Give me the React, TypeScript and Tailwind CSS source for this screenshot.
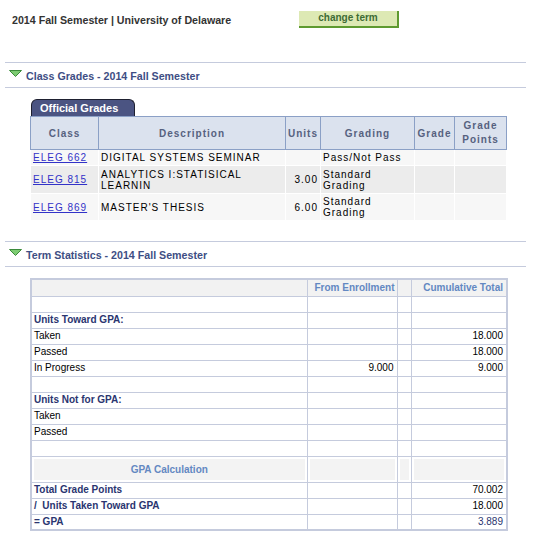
import React from "react";

function Tri() {
  return (
    <svg width="13" height="7" viewBox="0 0 13 7" className="shrink-0">
      <polygon points="0.5,0.5 12.5,0.5 6.5,6.5" fill="#7dcc72" stroke="#3b8a3b" strokeWidth="1" />
    </svg>
  );
}

function Band({ title }: { title: string }) {
  return (
    <div className="ml-[5px] w-[521px] h-[26px] border-y border-[#c5cbdd] flex items-start pt-[7px] pl-[4px]">
      <Tri />
      <div className="ml-[4px] -mt-[1px] text-[10.67px] leading-[14px] font-bold text-[#3e4e84]">{title}</div>
    </div>
  );
}

type GRow = { cls: string; desc: string[]; units: string; grading: string[]; h: string; bg: string };

const grades: GRow[] = [
  { cls: "ELEG 662", desc: ["DIGITAL SYSTEMS SEMINAR"], units: "", grading: ["Pass/Not Pass"], h: "h-[16px]", bg: "bg-[#f7f7f7]" },
  { cls: "ELEG 815", desc: ["ANALYTICS I:STATISICAL", "LEARNIN"], units: "3.00", grading: ["Standard", "Grading"], h: "h-[28px]", bg: "bg-[#ececec]" },
  { cls: "ELEG 869", desc: ["MASTER'S THESIS"], units: "6.00", grading: ["Standard", "Grading"], h: "h-[27px]", bg: "bg-[#f7f7f7]" },
];

type SRow =
  | { kind: "blank" }
  | { kind: "label"; text: string }
  | { kind: "data"; text: string; c2?: string; c4?: string; bold?: boolean; blue?: boolean }
  | { kind: "calc" };

const stats: SRow[] = [
  { kind: "blank" },
  { kind: "label", text: "Units Toward GPA:" },
  { kind: "data", text: "Taken", c4: "18.000" },
  { kind: "data", text: "Passed", c4: "18.000" },
  { kind: "data", text: "In Progress", c2: "9.000", c4: "9.000" },
  { kind: "blank" },
  { kind: "label", text: "Units Not for GPA:" },
  { kind: "data", text: "Taken" },
  { kind: "data", text: "Passed" },
  { kind: "blank" },
  { kind: "calc" },
  { kind: "data", text: "Total Grade Points", c4: "70.002", bold: true },
  { kind: "data", text: "/  Units Taken Toward GPA", c4: "18.000", bold: true },
  { kind: "data", text: "= GPA", c4: "3.889", bold: true, blue: true },
];

const sc = "border border-[#c5cbdd] h-[16px] p-0 align-middle leading-[12px]";

export default function App() {
  return (
    <div className="w-[535px] h-[548px] bg-white font-['Liberation_Sans',Arial,sans-serif] text-black overflow-hidden">
      <div className="flex items-start pl-[12px] pt-[11px] h-[62px]">
        <div className="w-[287px] pt-[3px] text-[10.67px] font-bold text-[#333] leading-[12px]">
          2014 Fall Semester | University of Delaware
        </div>
        <div className="w-[100px] h-[17px] bg-[#dde9b4] border-r-2 border-b-2 border-[#5e9a30] text-center text-[10px] font-bold text-[#3d6b35] leading-[14px]">
          change term
        </div>
      </div>

      <Band title="Class Grades - 2014 Fall Semester" />

      <div className="mt-[11px] ml-[31px] w-[104px] h-[17px] rounded-t-[6px] bg-[#4b5482] border border-b-0 border-[#1e2030] text-white font-bold text-[11px] leading-[16px] pl-[8px]">
        Official Grades
      </div>
      <table className="ml-[30px] w-[476px] table-fixed border-collapse border border-[#a9b6d2] text-[10px] tracking-[1px]">
        <colgroup>
          <col className="w-[68px]" />
          <col className="w-[187px]" />
          <col className="w-[35px]" />
          <col className="w-[94px]" />
          <col className="w-[40px]" />
          <col className="w-[52px]" />
        </colgroup>
        <thead>
          <tr className="bg-[#dbe2ee] text-[#56617f] font-bold">
            <th className="border border-[#8ba0c6] h-[33px] p-0 text-center">Class</th>
            <th className="border border-[#8ba0c6] p-0 text-center">Description</th>
            <th className="border border-[#8ba0c6] p-0 text-center">Units</th>
            <th className="border border-[#8ba0c6] p-0 text-center">Grading</th>
            <th className="border border-[#8ba0c6] p-0 text-center">Grade</th>
            <th className="border border-[#8ba0c6] p-0 text-center leading-[14px]">
              Grade
              <br />
              Points
            </th>
          </tr>
        </thead>
        <tbody>
          {grades.map((g, i) => (
            <tr key={i} className={g.bg}>
              <td className={`border border-white p-0 pl-[2px] align-middle ${g.h}`}>
                <span className="text-[#3232c8] underline">{g.cls}</span>
              </td>
              <td className="border border-white p-0 pl-[2px] align-middle leading-[11px]">
                {g.desc.map((d, j) => (
                  <div key={j}>{d}</div>
                ))}
              </td>
              <td className="border border-white p-0 pr-[2px] text-right align-middle">{g.units}</td>
              <td className="border border-white p-0 pl-[2px] align-middle leading-[11px]">
                {g.grading.map((d, j) => (
                  <div key={j}>{d}</div>
                ))}
              </td>
              <td className="border border-white p-0"></td>
              <td className="border border-white p-0"></td>
            </tr>
          ))}
        </tbody>
      </table>

      <div className="mt-[20px]">
        <Band title="Term Statistics - 2014 Fall Semester" />
      </div>

      <table className="mt-[11px] ml-[30px] w-[476px] table-fixed border-collapse border-2 border-[#c5cbdd] text-[10px]">
        <colgroup>
          <col className="w-[276px]" />
          <col className="w-[90px]" />
          <col className="w-[14px]" />
          <col className="w-[96px]" />
        </colgroup>
        <thead>
          <tr className="bg-[#f2f2f2] text-[#6388c2] font-bold">
            <th className={`${sc} h-[17px]`}></th>
            <th className={`${sc} text-right pr-[2px]`}>From Enrollment</th>
            <th className={sc}></th>
            <th className={`${sc} text-right pr-[3px]`}>Cumulative Total</th>
          </tr>
        </thead>
        <tbody>
          {stats.map((r, i) => {
            if (r.kind === "blank")
              return (
                <tr key={i}>
                  <td className={sc}></td>
                  <td className={sc}></td>
                  <td className={sc}></td>
                  <td className={sc}></td>
                </tr>
              );
            if (r.kind === "label")
              return (
                <tr key={i}>
                  <td className={`${sc} pl-[2px] font-bold text-[#2a3570]`}>{r.text}</td>
                  <td className={sc}></td>
                  <td className={sc}></td>
                  <td className={sc}></td>
                </tr>
              );
            if (r.kind === "calc")
              return (
                <tr key={i}>
                  <td className={`${sc} h-[26px] p-[2px]`}>
                    <div className="h-[21px] bg-[#f3f3f3] text-center font-bold text-[#6388c2] leading-[21px]">
                      GPA Calculation
                    </div>
                  </td>
                  <td className={`${sc} p-[2px]`}>
                    <div className="h-[21px] bg-[#f3f3f3]"></div>
                  </td>
                  <td className={`${sc} p-[2px]`}>
                    <div className="h-[21px] bg-[#f3f3f3]"></div>
                  </td>
                  <td className={`${sc} p-[2px]`}>
                    <div className="h-[21px] bg-[#f3f3f3]"></div>
                  </td>
                </tr>
              );
            return (
              <tr key={i}>
                <td className={`${sc} pl-[2px] whitespace-pre ${r.bold ? "font-bold text-[#2a3570]" : ""}`}>{r.text}</td>
                <td className={`${sc} text-right pr-[3px]`}>{r.c2 ?? ""}</td>
                <td className={sc}></td>
                <td className={`${sc} text-right pr-[3px] ${r.blue ? "text-[#2a3570]" : ""}`}>{r.c4 ?? ""}</td>
              </tr>
            );
          })}
        </tbody>
      </table>
    </div>
  );
}
